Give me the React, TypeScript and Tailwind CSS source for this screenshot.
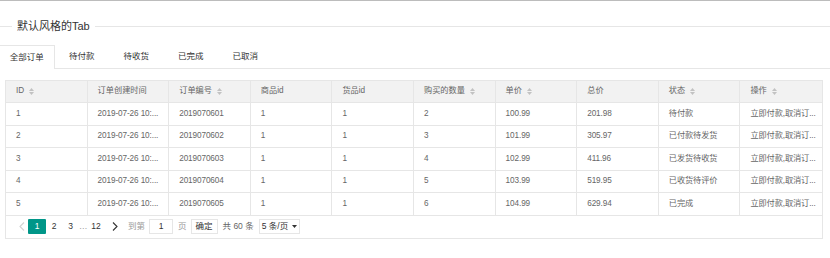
import React from "react";

const cols = [
  { key: "id", title: "ID", sort: true },
  { key: "time", title: "订单创建时间" },
  { key: "no", title: "订单编号", sort: true },
  { key: "goods", title: "商品id" },
  { key: "product", title: "货品id" },
  { key: "num", title: "购买的数量", sort: true },
  { key: "price", title: "单价", sort: true },
  { key: "total", title: "总价" },
  { key: "status", title: "状态", sort: true },
  { key: "op", title: "操作", sort: true },
];

const statuses = ["待付款", "已付款待发货", "已发货待收货", "已收货待评价", "已完成"];
const totals = ["201.98", "305.97", "411.96", "519.95", "629.94"];

const rows = [1, 2, 3, 4, 5].map((i) => ({
  id: String(i),
  time: "2019-07-26 10:...",
  no: "201907060" + i,
  goods: "1",
  product: "1",
  num: String(i + 1),
  price: (99.99 + i).toFixed(2),
  total: totals[i - 1],
  status: statuses[i - 1],
  op: "立即付款,取消订...",
}));

function SortIcon() {
  return (
    <span className="ml-[5px] inline-flex flex-col gap-[1px]">
      <svg width="5" height="3" viewBox="0 0 5 3"><path d="M2.5 0L5 3H0z" fill="#c2c2c2" /></svg>
      <svg width="5" height="3" viewBox="0 0 5 3"><path d="M0 0h5L2.5 3z" fill="#c2c2c2" /></svg>
    </span>
  );
}

function Chevron({ dir, color }: { dir: "l" | "r"; color: string }) {
  return (
    <svg width="6" height="9" viewBox="0 0 6 9">
      <path
        d={dir === "l" ? "M5 0.5L1 4.5L5 8.5" : "M1 0.5L5 4.5L1 8.5"}
        fill="none"
        stroke={color}
        strokeWidth="1.1"
      />
    </svg>
  );
}

export default function App() {
  const tabs = ["全部订单", "待付款", "待收货", "已完成", "已取消"];
  return (
    <div
      className="w-[830px] h-[258px] bg-white border-t border-[#bcbcbc] overflow-hidden text-[#333]"
      style={{ fontFamily: '"Liberation Sans", "Noto Sans CJK SC", sans-serif' }}
    >
      {/* fieldset title */}
      <div className="flex items-center mt-[16px] h-[18px]">
        <div className="w-[12px] border-t border-[#e6e6e6]" />
        <span className="px-[5px] text-[11px] text-[#333]">默认风格的Tab</span>
        <div className="flex-1 border-t border-[#e6e6e6]" />
      </div>

      {/* tabs */}
      <div className="mt-[10px] flex h-[24px] border-b border-[#e6e6e6]">
        {tabs.map((t, i) => (
          <div
            key={t}
            className={
              "w-[54.5px] flex items-center justify-center text-[8.5px] text-[#333] " +
              (i === 0 ? "border-t border-r border-[#e6e6e6] bg-white -mb-px h-[24px]" : "")
            }
          >
            {t}
          </div>
        ))}
      </div>

      {/* table */}
      <div className="mt-[11px] ml-[5px] w-[818px] border border-[#e6e6e6] text-[8.2px] text-[#666]">
        <div className="grid grid-cols-10 h-[22px] bg-[#f2f2f2] border-b border-[#e6e6e6]">
          {cols.map((c, i) => (
            <div
              key={c.key}
              className={"flex items-center px-[10px] " + (i < 9 ? "border-r border-[#e6e6e6]" : "")}
            >
              {c.title}
              {c.sort && <SortIcon />}
            </div>
          ))}
        </div>
        {rows.map((r) => (
          <div key={r.id} className="grid grid-cols-10 h-[22.5px] border-b border-[#e6e6e6]">
            {cols.map((c, i) => (
              <div
                key={c.key}
                className={"flex items-center pl-[10px] pr-[3px] min-w-0 overflow-hidden " + (i < 9 ? "border-r border-[#e6e6e6]" : "")}
              >
                <span className="whitespace-nowrap tracking-[-0.1px]">
                  {(r as Record<string, string>)[c.key]}
                </span>
              </div>
            ))}
          </div>
        ))}
        {/* pagination */}
        <div className="flex items-center h-[22px] pl-[9px] text-[8.5px] text-[#333]">
          <span className="w-[14px] flex justify-center"><Chevron dir="l" color="#d2d2d2" /></span>
          <span className="ml-[-1px] w-[18px] h-[15px] flex items-center justify-center bg-[#009688] text-white rounded-[1px]">1</span>
          <span className="w-[16px] text-center">2</span>
          <span className="w-[17px] text-center">3</span>
          <span className="w-[8px] text-center text-[#999]">…</span>
          <span className="w-[18px] text-center">12</span>
          <span className="w-[20px] flex justify-center"><Chevron dir="r" color="#333" /></span>
          <span className="ml-[3px] text-[#999]">到第</span>
          <span className="ml-[4px] w-[24px] h-[15px] border border-[#e6e6e6] flex items-center justify-center">1</span>
          <span className="ml-[5px] text-[#999]">页</span>
          <span className="ml-[4px] w-[27px] h-[15px] border border-[#e6e6e6] flex items-center justify-center">确定</span>
          <span className="ml-[5px] text-[#666]">共 60 条</span>
          <span className="ml-[5px] h-[15px] px-[2px] border border-[#e6e6e6] flex items-center gap-[4px]">
            5 条/页
            <svg width="5" height="3" viewBox="0 0 5 3"><path d="M0 0h5L2.5 3z" fill="#333" /></svg>
          </span>
        </div>
      </div>
    </div>
  );
}
